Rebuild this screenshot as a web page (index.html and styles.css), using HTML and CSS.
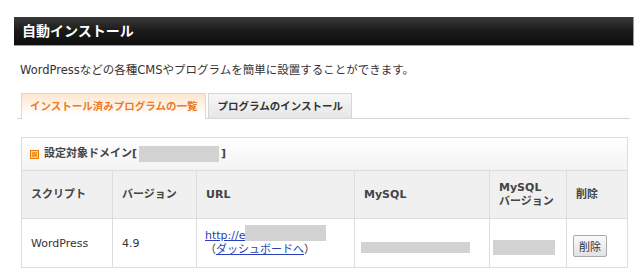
FILE: index.html
```html
<!DOCTYPE html>
<html lang="ja">
  <head>
    <meta charset="UTF-8" />
    <title>自動インストール</title>
    <link rel="stylesheet" href="styles.css">
  </head>
  <body>
    <div class="page">
      <h1 class="page-title">自動インストール</h1>
      <p class="lead">WordPressなどの各種CMSやプログラムを簡単に設置することができます。</p>

      <div class="tabs">
        <span class="tab tab-active">インストール済みプログラムの一覧</span>
        <span class="tab">プログラムのインストール</span>
      </div>

      <div class="panel">
        <div class="panel-head">
          <span class="mark"></span>
          設定対象ドメイン[<span class="mask mask-domain"></span>]
        </div>
        <table>
          <thead>
            <tr>
              <th class="c-script">スクリプト</th>
              <th class="c-ver">バージョン</th>
              <th class="c-url">URL</th>
              <th class="c-db">MySQL</th>
              <th class="c-dbver">MySQL<br />バージョン</th>
              <th class="c-del">削除</th>
            </tr>
          </thead>
          <tbody>
            <tr>
              <td>WordPress</td>
              <td>4.9</td>
              <td class="url-cell">
                <a href="#">http://example.jp/</a><span class="mask mask-url"></span><br />
                （<a href="#">ダッシュボードへ</a>）
              </td>
              <td><span class="mask mask-db"></span></td>
              <td><span class="mask mask-dbver"></span></td>
              <td><button type="button" class="del-btn">削除</button></td>
            </tr>
          </tbody>
        </table>
      </div>
    </div>
  </body>
</html>
```
FILE: styles.css
```css
body {
  margin: 0;
  padding: 0;
  font-family: "DejaVu Sans", "Noto Sans CJK JP", sans-serif;
  font-size: 11px;
  color: #333;
  background: #fff;
}
.page {
  width: 620px;
  margin-left: 14px;
  padding-top: 17px;
}
.page-title {
  margin: 0;
  height: 28px;
  line-height: 28px;
  padding-left: 8px;
  font-size: 14px;
  font-weight: bold;
  color: #fff;
  background: linear-gradient(#3a3a3a, #1a1a1a 50%, #0e0e0e);
  border: 1px solid #999;
  border-width: 0 1px 1px 0;
}
.lead {
  margin: 17px 0 0 6px;
  font-size: 11.5px;
  line-height: 14px;
}
.tabs {
  display: flex;
  gap: 2px;
  margin: 16px 4px 0 3px;
  padding-left: 4px;
  border-bottom: 1px solid #d6d6d6;
  height: 25px;
}
.tab {
  display: block;
  height: 24px;
  line-height: 25px;
  padding: 0 8px;
  border: 1px solid #d6d6d6;
  border-bottom: none;
  font-weight: bold;
  font-size: 10.5px;
  white-space: nowrap;
  color: #333;
  background: linear-gradient(#f7f7f7, #e6e6e6);
}
.tab-active {
  color: #ef7a22;
  background: linear-gradient(#fde6cf, #fff 85%);
  border-color: #e5d5c5;
  height: 25px;
  margin-bottom: -1px;
}
.panel {
  margin: 18px 6px 0 7px;
  border: 1px solid #ddd;
}
.panel-head {
  height: 32px;
  line-height: 32px;
  padding-left: 8px;
  font-weight: bold;
  color: #444;
  background: linear-gradient(#fff, #f3f3f3);
  border-bottom: 1px solid #ddd;
  display: flex;
  align-items: center;
}
.mark {
  display: inline-block;
  width: 7px;
  height: 7px;
  border: 1px solid #e97a12;
  background: #f39a2c;
  box-shadow: inset 0 0 0 1px #fbd3a4;
  margin-right: 5px;
}
.mask {
  display: inline-block;
  background: #d2d2d2;
  vertical-align: middle;
}
.mask-domain {
  width: 80px;
  height: 16px;
  margin: 0 2px;
}
table {
  width: 100%;
  border-collapse: collapse;
  table-layout: fixed;
}
th,
td {
  border-right: 1px solid #ddd;
  padding: 0 9px;
  text-align: left;
  height: 47px;
}
th:last-child,
td:last-child {
  border-right: none;
}
th {
  background: #f0f0f0;
  font-weight: bold;
  color: #444;
  border-bottom: 1px solid #ddd;
  line-height: 14px;
}
td {
  background: #fff;
  height: 48px;
}
.c-script { width: 72px; }
.c-ver { width: 65px; }
.c-url { width: 139px; }
.c-db { width: 116px; }
.c-dbver { width: 58px; }
.url-cell {
  position: relative;
  line-height: 14px;
  padding-left: 8px;
}
.url-cell a {
  color: #2a3fb8;
}
.mask-url {
  position: absolute;
  left: 48px;
  top: 6px;
  width: 81px;
  height: 16px;
}
.mask-db {
  width: 109px;
  height: 11px;
  margin-top: 8px;
  margin-left: -3px;
}
.mask-dbver {
  width: 62px;
  height: 15px;
  margin-top: 8px;
  margin-left: -6px;
}
.del-btn {
  font-family: inherit;
  font-size: 11px;
  color: #333;
  padding: 2px 5px;
  height: 22px;
  border: 1px solid #aaa;
  border-radius: 2px;
  background: linear-gradient(#fafafa, #e2e2e2);
  margin-left: -3px;
  margin-top: 5px;
}
```
